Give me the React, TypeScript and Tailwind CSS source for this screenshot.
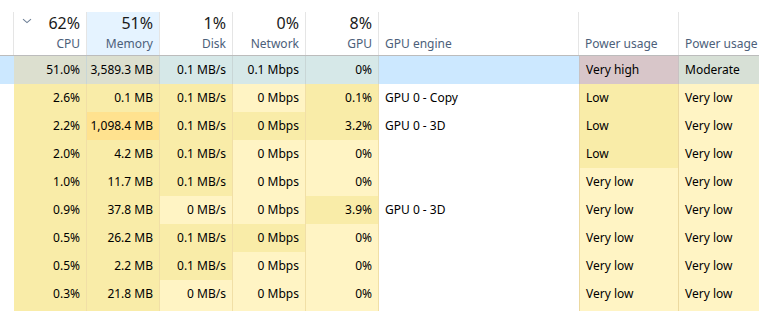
import React from "react";

type Row = {
  cpu: string;
  mem: string;
  disk: string;
  net: string;
  gpu: string;
  engine: string;
  power: string;
  trend: string;
  heat: number[];
  selected?: boolean;
};

const rows: Row[] = [
  { cpu: "51.0%", mem: "3,589.3 MB", disk: "0.1 MB/s", net: "0.1 Mbps", gpu: "0%", engine: "", power: "Very high", trend: "Moderate", heat: [0, 0, 0, 0, 0, 0, 0], selected: true },
  { cpu: "2.6%", mem: "0.1 MB", disk: "0.1 MB/s", net: "0 Mbps", gpu: "0.1%", engine: "GPU 0 - Copy", power: "Low", trend: "Very low", heat: [2, 2, 2, 1, 2, 2, 1] },
  { cpu: "2.2%", mem: "1,098.4 MB", disk: "0.1 MB/s", net: "0 Mbps", gpu: "3.2%", engine: "GPU 0 - 3D", power: "Low", trend: "Very low", heat: [2, 3, 2, 2, 2, 2, 1] },
  { cpu: "2.0%", mem: "4.2 MB", disk: "0.1 MB/s", net: "0 Mbps", gpu: "0%", engine: "", power: "Low", trend: "Very low", heat: [2, 2, 2, 1, 1, 2, 1] },
  { cpu: "1.0%", mem: "11.7 MB", disk: "0.1 MB/s", net: "0 Mbps", gpu: "0%", engine: "", power: "Very low", trend: "Very low", heat: [2, 2, 2, 1, 1, 1, 1] },
  { cpu: "0.9%", mem: "37.8 MB", disk: "0 MB/s", net: "0 Mbps", gpu: "3.9%", engine: "GPU 0 - 3D", power: "Very low", trend: "Very low", heat: [2, 2, 1, 1, 2, 1, 1] },
  { cpu: "0.5%", mem: "26.2 MB", disk: "0.1 MB/s", net: "0 Mbps", gpu: "0%", engine: "", power: "Very low", trend: "Very low", heat: [2, 2, 2, 2, 1, 1, 1] },
  { cpu: "0.5%", mem: "2.2 MB", disk: "0.1 MB/s", net: "0 Mbps", gpu: "0%", engine: "", power: "Very low", trend: "Very low", heat: [2, 2, 2, 1, 1, 1, 1] },
  { cpu: "0.3%", mem: "21.8 MB", disk: "0 MB/s", net: "0 Mbps", gpu: "0%", engine: "", power: "Very low", trend: "Very low", heat: [2, 2, 1, 1, 1, 1, 1] },
  // next row only peeks in at the bottom edge
  { cpu: "", mem: "", disk: "", net: "", gpu: "", engine: "", power: "", trend: "", heat: [2, 2, 1, 1, 1, 1, 1] },
];

const heatBg = ["", "bg-[#fff4c4]", "bg-[#f9eca8]", "bg-[#ffe28f]"];

const selBg = [
  "bg-[#dcdfcf]",
  "bg-[#dcdfcf]",
  "bg-[#d6e8e8]",
  "bg-[#d6e8e8]",
  "bg-[#d6e8e8]",
  "bg-[#d8c6c9]",
  "bg-[#d7e0d6]",
];

function HeaderCell({
  top,
  label,
  active,
  chevron,
  width,
  align = "right",
}: {
  top?: string;
  label: string;
  active?: boolean;
  chevron?: boolean;
  width: string;
  align?: "right" | "left";
}) {
  return (
    <div
      className={`relative flex shrink-0 flex-col overflow-hidden whitespace-nowrap border-r border-[#e5e5e5] ${width} ${
        active ? "bg-[#e5f3ff]" : ""
      } ${align === "right" ? "items-end pr-[6px]" : "items-start pl-[6px]"}`}
    >
      {chevron && (
        <svg
          className="absolute left-[8px] top-[6px]"
          width="10"
          height="6"
          viewBox="0 0 10 6"
          fill="none"
        >
          <path d="M1 1.2 L5 4.6 L9 1.2" stroke="#6d7f96" strokeWidth="1.1" />
        </svg>
      )}
      <div className="h-[22px] text-[16px] leading-[22px] text-[#1a1a1a]">{top}</div>
      <div className="mt-[2px] text-[12px] leading-[16px] text-[#4c607a]">{label}</div>
    </div>
  );
}

export default function App() {
  return (
    <div
      className="h-[311px] w-[759px] overflow-hidden bg-white text-[12px] text-black"
      style={{ fontFamily: '"Segoe UI", "Noto Sans", sans-serif' }}
    >
      <div className="flex h-[56px] border-b border-[#bcbcbc] pt-[12px]">
        <div className="w-[14px] shrink-0 border-r border-[#e5e5e5]" />
        <HeaderCell top="62%" label="CPU" chevron width="w-[73px]" />
        <HeaderCell top="51%" label="Memory" active width="w-[73px]" />
        <HeaderCell top="1%" label="Disk" width="w-[73px]" />
        <HeaderCell top="0%" label="Network" width="w-[73px]" />
        <HeaderCell top="8%" label="GPU" width="w-[73px]" />
        <HeaderCell label="GPU engine" align="left" width="w-[200px]" />
        <HeaderCell label="Power usage" align="left" width="w-[100px]" />
        <HeaderCell label="Power usage trend" align="left" width="w-[110px]" />
      </div>

      {rows.map((r, i) => {
        const nums = [r.cpu, r.mem, r.disk, r.net, r.gpu];
        const cellBg = (c: number) => (r.selected ? selBg[c] : heatBg[r.heat[c]]);
        return (
          <div
            key={i}
            className={`flex h-[28px] items-center whitespace-nowrap ${
              r.selected ? "bg-[#cce8ff]" : ""
            }`}
          >
            <div className="h-full w-[14px] shrink-0" />
            {nums.map((n, c) => (
              <div
                key={c}
                className={`flex h-full w-[73px] shrink-0 items-center justify-end border-r pr-[6px] ${cellBg(c)} ${
                  r.selected ? "border-[#c9d6d6]" : "border-[#f1dfa6]"
                }`}
              >
                {n}
              </div>
            ))}
            <div className="flex h-full w-[200px] shrink-0 items-center pl-[6px]">{r.engine}</div>
            <div
              className={`flex h-full w-[100px] shrink-0 items-center border-x pl-[6px] ${cellBg(5)} ${
                r.selected ? "border-[#c9c2c3]" : "border-[#ecd9a0]"
              }`}
            >
              {r.power}
            </div>
            <div className={`flex h-full w-[100px] shrink-0 items-center pl-[6px] ${cellBg(6)}`}>
              {r.trend}
            </div>
          </div>
        );
      })}
    </div>
  );
}
